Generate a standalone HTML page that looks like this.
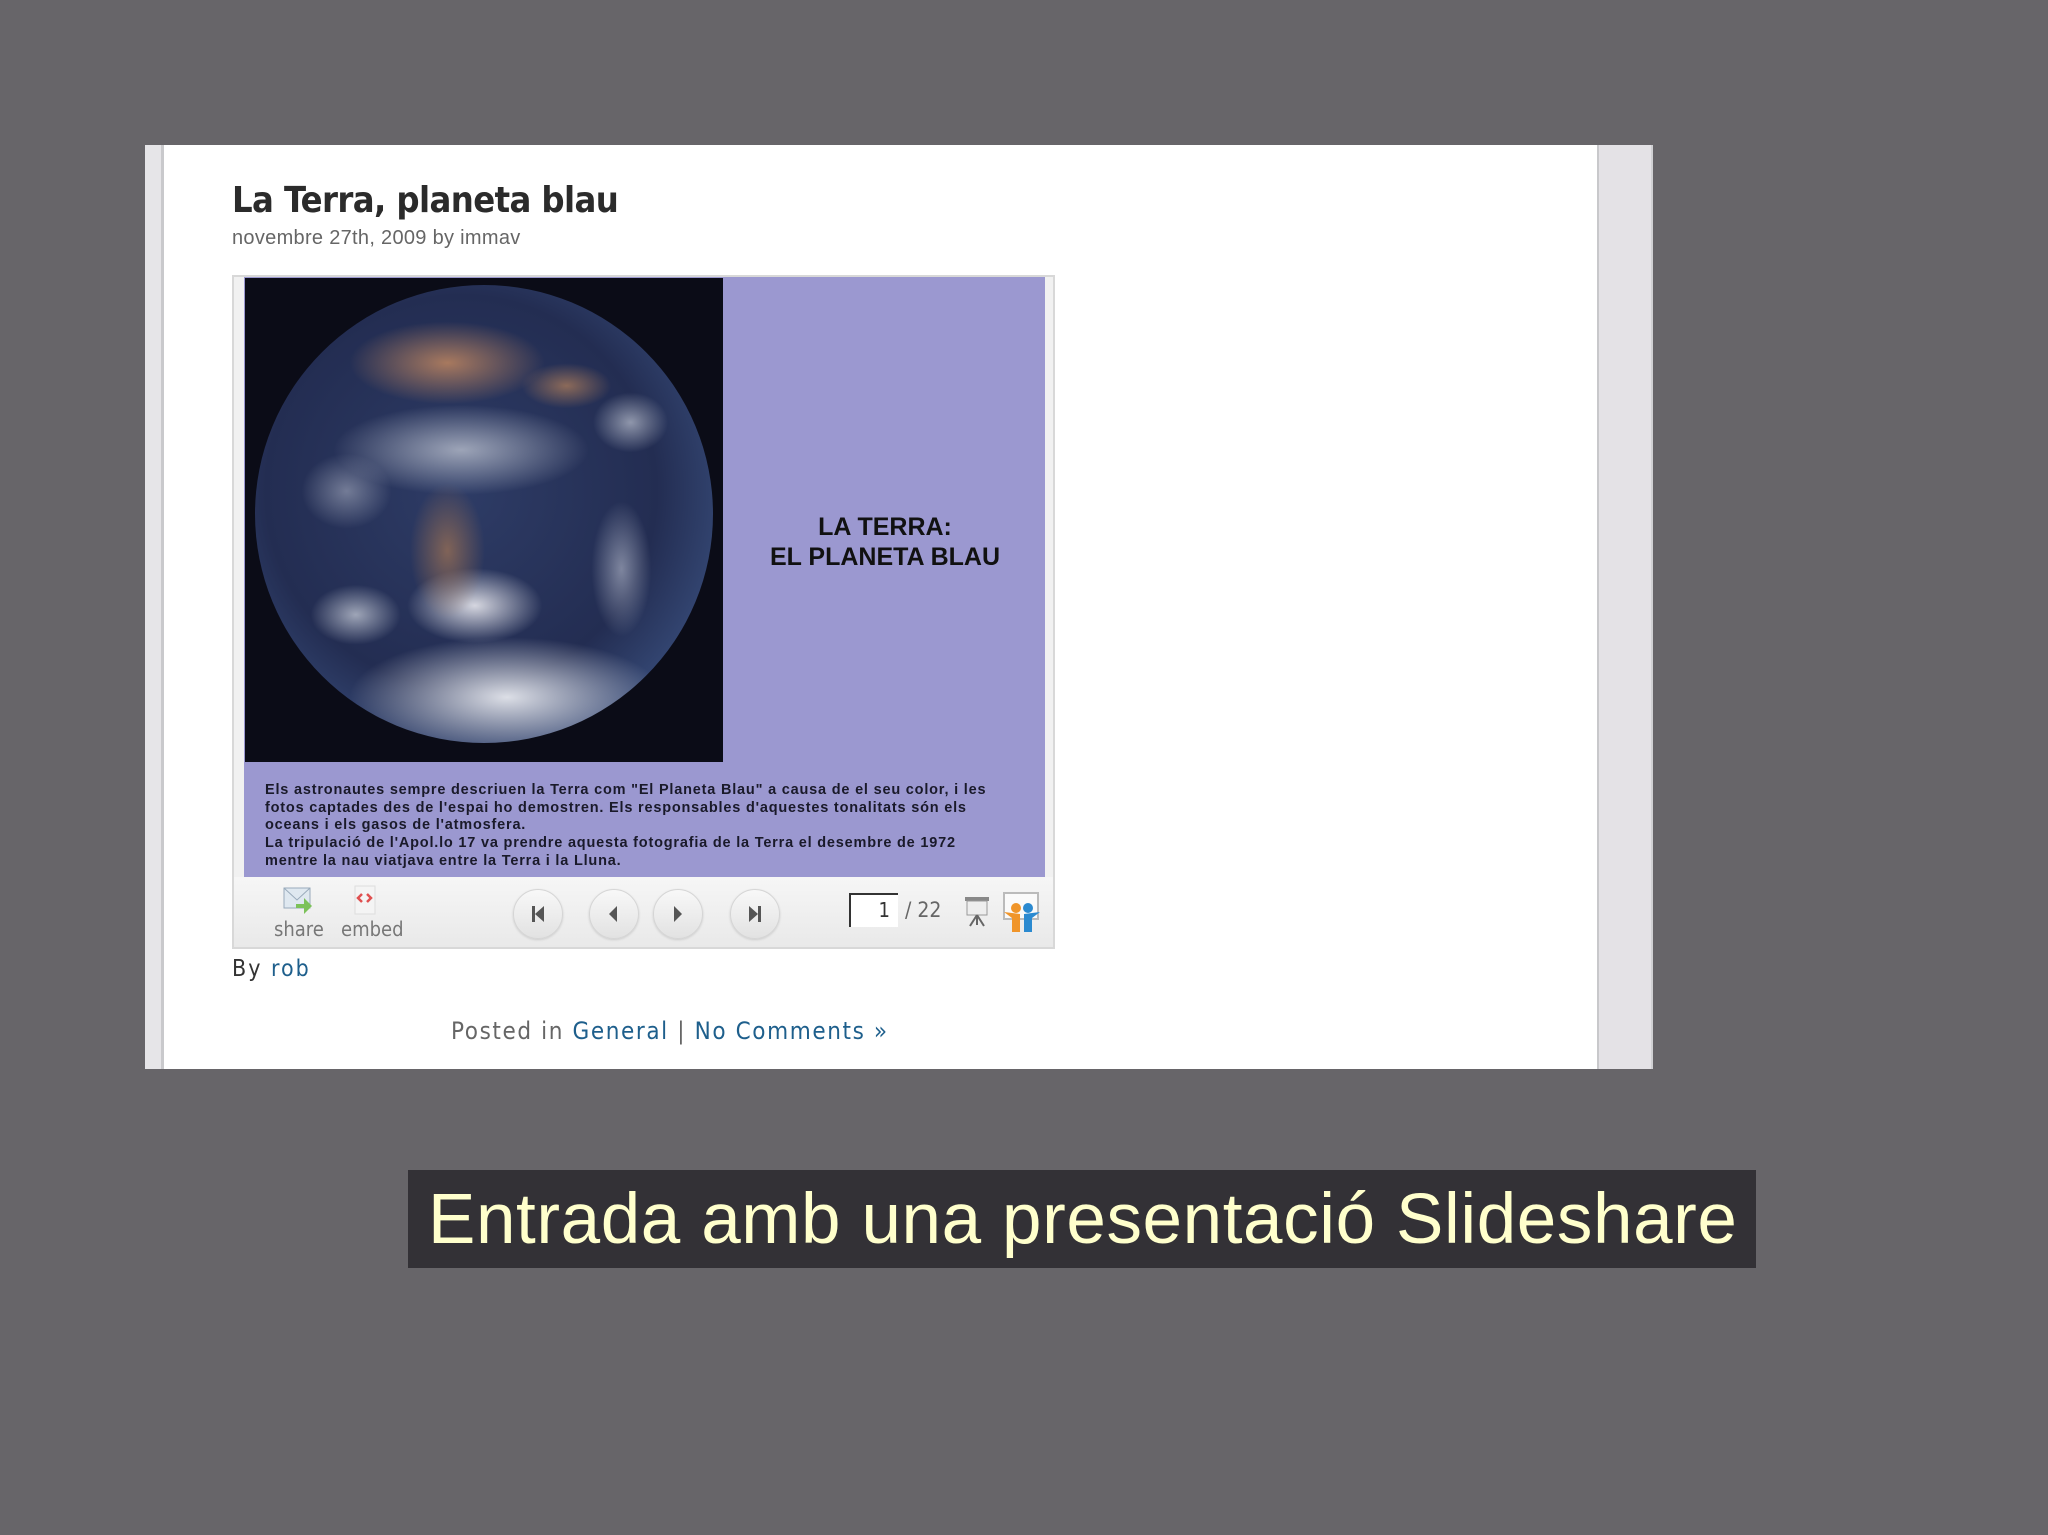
<!DOCTYPE html>
<html><head><meta charset="utf-8"><style>
*{margin:0;padding:0;box-sizing:border-box}
body{width:2048px;height:1535px;background:#676569;position:relative;overflow:hidden;font-family:"Liberation Sans",sans-serif}
.a{position:absolute}
.panel{left:145px;top:145px;width:1508px;height:924px;background:#fff}
.ls{left:145px;top:145px;width:19px;height:924px;background:#e6e5e8;border-right:3px solid #c9c9cc}
.rs{left:1597px;top:145px;width:56px;height:924px;background:#e4e2e6;border-left:2px solid #c8c8cb;border-right:2px solid #d0d0d3}
.title{left:232px;top:180px;font-size:36px;font-weight:bold;color:#2b2b2b;letter-spacing:-0.6px;font-family:"DejaVu Sans Condensed","Liberation Sans Narrow","Liberation Sans",sans-serif}
.date{left:232px;top:227px;font-size:20px;color:#666;letter-spacing:0.3px}
.box{left:232px;top:275px;width:823px;height:674px;background:#f1f1f1;border:2px solid #d8d8d8}
.slide{left:244px;top:277px;width:801px;height:600px;background:#9b98d0}
.blk{left:245px;top:278px;width:478px;height:484px;background:#0b0c17}
.earth{left:255px;top:285px;width:458px;height:458px;border-radius:50%;
background:
radial-gradient(ellipse 130px 55px at 42% 17%,rgba(175,125,95,.95),rgba(175,125,95,0) 75%),
radial-gradient(ellipse 60px 30px at 68% 22%,rgba(165,120,90,.8),rgba(165,120,90,0) 75%),
radial-gradient(ellipse 50px 90px at 42% 58%,rgba(150,110,85,.8),rgba(150,110,85,0) 75%),
radial-gradient(ellipse 210px 80px at 55% 90%,rgba(230,232,238,.95),rgba(230,232,238,0) 75%),
radial-gradient(ellipse 90px 50px at 48% 70%,rgba(232,232,238,.9),rgba(232,232,238,0) 75%),
radial-gradient(ellipse 60px 40px at 22% 72%,rgba(210,215,225,.7),rgba(210,215,225,0) 75%),
radial-gradient(ellipse 40px 90px at 80% 62%,rgba(200,205,220,.55),rgba(200,205,220,0) 75%),
radial-gradient(ellipse 50px 40px at 82% 30%,rgba(215,220,230,.6),rgba(215,220,230,0) 75%),
radial-gradient(ellipse 170px 60px at 45% 36%,rgba(205,210,220,.7),rgba(205,210,220,0) 75%),
radial-gradient(ellipse 60px 50px at 20% 45%,rgba(190,195,210,.5),rgba(190,195,210,0) 75%),
radial-gradient(circle at 45% 45%,#2e3c66 0%,#232d52 55%,#3f5788 88%,#8a9ac0 100%)}
.st{left:725px;top:512px;width:320px;text-align:center;font-size:25px;font-weight:bold;color:#111;line-height:30px}
.body{left:265px;top:782px;font-size:14.5px;font-weight:bold;color:#1a1a2a;line-height:17.7px;white-space:pre;letter-spacing:0.8px}
.bar{left:234px;top:877px;width:819px;height:70px;background:linear-gradient(#f6f6f6,#e9e9e9)}
.lbl{font-size:20px;color:#777;font-family:"DejaVu Sans Condensed","Liberation Sans",sans-serif}
.btn{width:50px;height:50px;border-radius:50%;background:linear-gradient(#f8f8f8,#e2e2e2);border:1px solid #d5d5d5;box-shadow:0 1px 2px #ccc}
.by{left:232px;top:956px;font-size:23px;color:#333;letter-spacing:2px;font-family:"DejaVu Sans Condensed","Liberation Sans",sans-serif}
.lnk{color:#1e5f8c}
.posted{left:451px;top:1017px;font-size:24px;color:#666;letter-spacing:1.6px;font-family:"DejaVu Sans Condensed","Liberation Sans",sans-serif}
.cap{left:408px;top:1170px;width:1348px;height:98px;background:#333136;color:#ffffcc;font-size:71px;line-height:100px;padding-left:20px;white-space:nowrap;letter-spacing:0.6px}
</style></head><body>
<div class="a panel"></div>
<div class="a ls"></div>
<div class="a rs"></div>
<div class="a title">La Terra, planeta blau</div>
<div class="a date">novembre 27th, 2009 by immav</div>
<div class="a box"></div>
<div class="a slide"></div>
<div class="a blk"></div>
<div class="a earth"></div>
<div class="a st">LA TERRA:<br>EL PLANETA BLAU</div>
<div class="a body">Els astronautes sempre descriuen la Terra com "El Planeta Blau" a causa de el seu color, i les
fotos captades des de l'espai ho demostren. Els responsables d'aquestes tonalitats són els
oceans i els gasos de l'atmosfera.
La tripulació de l'Apol.lo 17 va prendre aquesta fotografia de la Terra el desembre de 1972
mentre la nau viatjava entre la Terra i la Lluna.</div>
<div class="a bar"></div>
<svg class="a" style="left:282px;top:886px" width="34" height="30"><rect x="2" y="2" width="26" height="20" fill="#dfe8f0" stroke="#9ab" /><path d="M2 2 L15 14 L28 2" stroke="#9ab" fill="none"/><path d="M14 18 h8 v-6 l8 8 -8 8 v-6 h-8z" fill="#7cc25a"/></svg>
<svg class="a" style="left:352px;top:884px" width="26" height="32"><rect x="3" y="2" width="20" height="28" fill="#f4f4f4" stroke="#ddd"/><path d="M10 10 l-4 4 4 4 M15 10 l4 4 -4 4" stroke="#e05050" stroke-width="2.5" fill="none"/></svg>
<div class="a lbl" style="left:274px;top:917px">share</div>
<div class="a lbl" style="left:341px;top:917px">embed</div>
<div class="a btn" style="left:513px;top:889px"></div>
<div class="a btn" style="left:589px;top:889px"></div>
<div class="a btn" style="left:653px;top:889px"></div>
<div class="a btn" style="left:730px;top:889px"></div>
<svg class="a" style="left:513px;top:889px" width="270" height="50" fill="#555">
<rect x="19" y="17" width="3" height="16"/><path d="M31 17 v16 l-9-8z"/>
<path d="M104 17 v16 l-8-8z"/>
<path d="M161 17 v16 l8-8z"/>
<path d="M236 17 v16 l9-8z"/><rect x="245" y="17" width="3" height="16"/>
</svg>
<div class="a" style="left:849px;top:893px;width:49px;height:34px;background:#fff;border-left:2px solid #333;border-top:2px solid #333;font-size:20px;text-align:right;padding-right:8px;line-height:30px;color:#333;font-family:'DejaVu Sans Condensed',sans-serif">1</div>
<div class="a lbl" style="left:905px;top:898px;color:#666;font-size:21px">/ 22</div>
<svg class="a" style="left:962px;top:894px" width="30" height="34"><rect x="3" y="3" width="24" height="4" fill="#888"/><rect x="5" y="7" width="20" height="14" fill="#eee" stroke="#999"/><path d="M15 21 v10 M15 21 l-7 11 M15 21 l7 11" stroke="#666" stroke-width="2"/></svg>
<svg class="a" style="left:1000px;top:890px" width="44" height="44"><rect x="4" y="3" width="34" height="26" fill="#fafafa" stroke="#bbb" stroke-width="2"/><circle cx="16" cy="18" r="5" fill="#f0952a"/><circle cx="28" cy="18" r="5" fill="#2b8ad0"/><path d="M4 22 l8 6 v14 h8 v-18z" fill="#f0952a"/><path d="M40 22 l-8 6 v14 h-8 v-18z" fill="#2b8ad0"/></svg>
<div class="a by">By <span class="lnk">rob</span></div>
<div class="a posted">Posted in <span class="lnk">General</span> | <span class="lnk">No Comments »</span></div>
<div class="a cap">Entrada amb una presentació Slideshare</div>
</body></html>
